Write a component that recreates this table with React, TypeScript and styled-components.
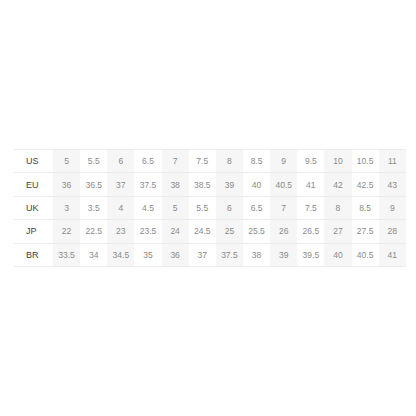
import styled, { createGlobalStyle } from 'styled-components';

const GlobalStyle = createGlobalStyle`
    html, body {
        margin: 0;
        padding: 0;
        background: #ffffff;
        font-family: "Liberation Sans", Arial, sans-serif;
    }
`

const StyledPage = styled.div`
    width: 416px;
    height: 416px;
    padding: 149px 10px 0 14px;
    box-sizing: border-box;
`

const StyledTable = styled.table`
    width: 392px;
    border-collapse: collapse;
    table-layout: fixed;
    border-top: 1px solid #ececec;
    border-bottom: 1px solid #ececec;
`

const StyledRow = styled.tr`
    height: 23.4px;
    border-top: 1px solid #ececec;
`

const StyledHead = styled.th`
    width: 39px;
    padding: 0 0 0 12px;
    box-sizing: border-box;
    text-align: left;
    font-weight: 400;
    font-size: 9px;
    color: #444444;
`

const StyledCell = styled.td<{ shaded: boolean }>`
    padding: 0;
    text-align: center;
    font-size: 8.5px;
    color: #8a8a8a;
    background: ${p => (p.shaded ? '#f6f6f6' : '#ffffff')};
`

const sizes: { label: string; values: string[] }[] = [
    { label: 'US', values: ['5', '5.5', '6', '6.5', '7', '7.5', '8', '8.5', '9', '9.5', '10', '10.5', '11'] },
    { label: 'EU', values: ['36', '36.5', '37', '37.5', '38', '38.5', '39', '40', '40.5', '41', '42', '42.5', '43'] },
    { label: 'UK', values: ['3', '3.5', '4', '4.5', '5', '5.5', '6', '6.5', '7', '7.5', '8', '8.5', '9'] },
    { label: 'JP', values: ['22', '22.5', '23', '23.5', '24', '24.5', '25', '25.5', '26', '26.5', '27', '27.5', '28'] },
    { label: 'BR', values: ['33.5', '34', '34.5', '35', '36', '37', '37.5', '38', '39', '39.5', '40', '40.5', '41'] },
]

export default function App() {
    return (
        <>
            <GlobalStyle />
            <StyledPage>
                <StyledTable>
                    <tbody>
                        {sizes.map(row => (
                            <StyledRow key={row.label}>
                                <StyledHead>{row.label}</StyledHead>
                                {row.values.map((v, i) => (
                                    <StyledCell key={i} shaded={i % 2 === 0}>{v}</StyledCell>
                                ))}
                            </StyledRow>
                        ))}
                    </tbody>
                </StyledTable>
            </StyledPage>
        </>
    )
}
